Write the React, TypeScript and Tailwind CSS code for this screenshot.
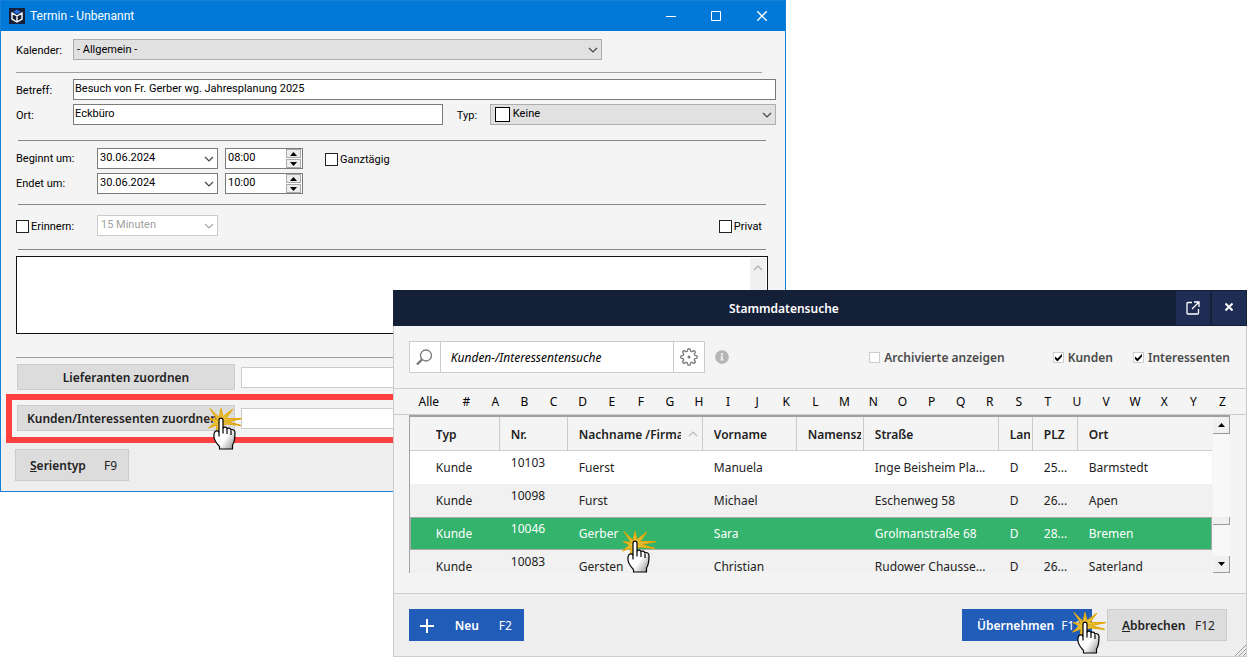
import React from 'react';
import { FaInfoCircle } from 'react-icons/fa';

const LETTERS = ['#', ...'ABCDEFGHIJKLMNOPQRSTUVWXYZ'.split('')];

const COLUMNS = ['Typ', 'Nr.', 'Nachname /Firma', 'Vorname', 'Namenszusatz', 'Straße', 'Land', 'PLZ', 'Ort'];

const ROWS = [
    { nr: '10103', nachname: 'Fuerst', vorname: 'Manuela', strasse: 'Inge Beisheim Pla...', plz: '25...', ort: 'Barmstedt' },
    { nr: '10098', nachname: 'Furst', vorname: 'Michael', strasse: 'Eschenweg 58', plz: '26...', ort: 'Apen' },
    { nr: '10046', nachname: 'Gerber', vorname: 'Sara', strasse: 'Grolmanstraße 68', plz: '28...', ort: 'Bremen' },
    { nr: '10083', nachname: 'Gersten', vorname: 'Christian', strasse: 'Rudower Chausse...', plz: '26...', ort: 'Saterland' },
];

const SELECTED = '10046';

// Outline of a cog with eight rounded teeth
const GEAR = Array.from({ length: 96 }, (_, i) => {
    const a = (i / 96) * Math.PI * 2;
    const r = 7.1 + 1.2 * Math.tanh(2 * Math.cos(a * 8));
    return `${(9 + r * Math.cos(a)).toFixed(2)},${(9 + r * Math.sin(a)).toFixed(2)}`;
}).join(' ');

const Chevron: React.FC<{ className?: string }> = ({ className = '' }) => (
    <svg width="10" height="6" viewBox="0 0 10 6" fill="none" stroke="currentColor" strokeWidth="1.2" className={`pointer-events-none absolute ${className}`}>
        <path d="M1 1l4 4 4-4" />
    </svg>
);

const ClickHand: React.FC<{ className?: string }> = ({ className = '' }) => (
    <svg width="36" height="44" viewBox="0 0 36 44" className={`pointer-events-none absolute z-10 ${className}`}>
        <path
            d="M3 1.5l9 9 2-9 2 8L26 2l-7 9.500L35 11.500l-14 3 13 4-14-1.500-5 1-6 8 1-8L1.500 21l7-6L2 11.500l8 1z"
            fill="#e9c443"
            stroke="#e5a800"
            strokeWidth="1"
        />
        <path d="M4 3l10 11M14.500 3v11M25 3L14 14M34 12l-20 2 19 4M3 12l11 2L3 20.500" fill="none" stroke="#d9a514" strokeWidth=".6" />
        <path
            d="M12 29V13c0-2.600 4-2.600 4 0v8c1-1.500 3.500-1 4 .6 1.200-1.100 3.400-.5 3.800 1.200 1.800-.8 4.200.2 4.200 2.700 0 6.500-.2 9.500-2.500 12.500v4H12.500v-2.500c-2-2.500-5-5-5.500-9.500-.3-3 .2-6 2.500-6.200 1.400-.1 2.500.7 2.500 2.700z"
            fill="url(#handShade)"
            stroke="#000"
            strokeWidth="1.200"
            strokeLinejoin="round"
        />
        <path d="M16 21v5.500M20 22v5M24 23.500v4.500" stroke="#000" strokeWidth="1.200" />
        <defs>
            <linearGradient id="handShade" x1="0.300" y1="0.400" x2="0.900" y2="1">
                <stop offset="0.400" stopColor="#fff" />
                <stop offset="1" stopColor="#999" />
            </linearGradient>
        </defs>
    </svg>
);

const Triangle: React.FC<{ down?: boolean }> = ({ down }) => (
    <svg width="7" height="4" viewBox="0 0 7 4">
        <path d={down ? 'M0 0h7L3.5 4z' : 'M0 4h7L3.5 0z'} fill="#000" />
    </svg>
);

const DateRow: React.FC<{ id: string; label: string; date: string; time: string; children?: React.ReactNode }> = ({ id, label, date, time, children }) => (
    <div className="flex h-[21px] items-center">
        <label htmlFor={id} className="w-[81px]">{label}</label>
        <div className="relative h-full w-[121px]">
            <select id={id} className="h-full w-full appearance-none border border-[#7a7a7a] bg-white pb-[2px] pl-[2px]">
                <option>{date}</option>
            </select>
            <Chevron className="right-[4px] top-[8px] text-[#444]" />
        </div>
        <div className="ml-[7px] flex h-full w-[78px] border border-[#7a7a7a] bg-white">
            <input aria-label={`${label} Uhrzeit`} defaultValue={time} className="w-full min-w-0 pb-[2px] pl-[2px] outline-none" />
            <div className="mr-px flex w-[15px] shrink-0 flex-col gap-px">
                <button aria-label="Später" className="flex w-full flex-1 items-center justify-center border border-[#aaa] bg-[#ececec]"><Triangle /></button>
                <button aria-label="Früher" className="flex w-full flex-1 items-center justify-center border border-[#aaa] bg-[#ececec]"><Triangle down /></button>
            </div>
        </div>
        {children}
    </div>
);

const BoxLabel: React.FC<{ label: string; className?: string }> = ({ label, className = '' }) => (
    <label className={`flex items-center gap-[2px] ${className}`}>
        <input type="checkbox" className="h-[13px] w-[13px] appearance-none border border-[#222] bg-white" />
        <span>{label}</span>
    </label>
);

const Filter: React.FC<{ label: string; checked?: boolean }> = ({ label, checked }) => (
    <label className="relative flex items-center gap-[4px]">
        <input type="checkbox" defaultChecked={checked} className="peer h-[11px] w-[11px] appearance-none border border-[#ccc] bg-white" />
        <svg width="9" height="9" viewBox="0 0 9 9" className="pointer-events-none absolute left-px hidden peer-checked:block">
            <path d="M1 3.500v2.500l2.500 2.500L8 3.500V1L3.500 5.500z" fill="#000" />
        </svg>
        <span className="font-semibold text-[#4a4a4a]">{label}</span>
    </label>
);

const AppointmentWindow: React.FC = () => (
    <section className="relative w-[63.03%] border border-[#1580d8] bg-[#f4f4f4] font-['Noto_Sans','Open_Sans',sans-serif] text-[11px] leading-[15px] text-black">
        {/* Title bar */}
        <header className="flex h-[30px] items-center bg-[#0078d7] pl-[8px] text-white">
            <svg width="16" height="16" viewBox="0 0 16 16">
                <rect width="16" height="16" fill="#14203c" />
                <path d="M3 5v6l5 3 5-3V5L8 8zM8 8v5" fill="none" stroke="#fff" strokeWidth="1.400" />
                <path d="M4 4l4-2.500L12 4 8 6z" fill="#2a6be0" />
            </svg>
            <h1 className="ml-[5px] font-['Roboto',sans-serif] text-[12px]">Termin - Unbenannt</h1>
            <div className="ml-auto flex h-full">
                <button aria-label="Minimieren" className="flex w-[46px] items-center justify-center">
                    <svg width="10" height="10"><path d="M0 5.500h10" stroke="#fff" /></svg>
                </button>
                <button aria-label="Maximieren" className="flex w-[45px] items-center justify-center">
                    <svg width="10" height="10"><path d="M.5.5h9v9h-9z" fill="none" stroke="#fff" /></svg>
                </button>
                <button aria-label="Schließen" className="flex w-[46px] items-center justify-center">
                    <svg width="10" height="10"><path d="M0 0l10 10M10 0L0 10" stroke="#fff" strokeWidth="1.300" /></svg>
                </button>
            </div>
        </header>

        {/* Form */}
        <div className="pb-[8px] pl-[15px] pr-[9px] pt-[8px]">
            <div className="font-['Roboto',sans-serif]">
                <div className="flex h-[21px] items-center">
                    <label htmlFor="kalender" className="w-[57px] pt-px">Kalender:</label>
                    <div className="relative mr-[174px] h-full flex-1">
                        <select id="kalender" className="h-full w-full appearance-none border border-[#adadad] bg-[#e1e1e1] pl-[3px]">
                            <option>- Allgemein -</option>
                        </select>
                        <Chevron className="right-[4px] top-[8px] text-[#444]" />
                    </div>
                </div>
                <hr className="mb-[6px] mr-[14px] mt-[12px] border-[#a0a0a0]" />
                <div className="flex h-[21px] items-center">
                    <label htmlFor="betreff" className="w-[57px] pt-px">Betreff:</label>
                    <input id="betreff" defaultValue="Besuch von Fr. Gerber wg. Jahresplanung 2025" className="h-full min-w-0 flex-1 border border-[#7a7a7a] bg-white pb-[2px] pl-px" />
                </div>
                <div className="mt-[4px] flex h-[21px] items-center">
                    <label htmlFor="ort" className="w-[57px] pt-px">Ort:</label>
                    <input id="ort" defaultValue="Eckbüro" className="h-full min-w-0 flex-[368] border border-[#7a7a7a] bg-white pb-[2px] pl-px" />
                    <label htmlFor="typ" className="w-[47px] pl-[14px] pt-px">Typ:</label>
                    <div className="relative h-full flex-[287]">
                        <select id="typ" className="h-full w-full appearance-none border border-[#adadad] bg-[#e1e1e1] pb-[2px] pl-[22px]">
                            <option>Keine</option>
                        </select>
                        <span className="pointer-events-none absolute left-[5px] top-[3px] h-[15px] w-[15px] border border-black bg-white" />
                        <Chevron className="right-[4px] top-[8px] text-[#444]" />
                    </div>
                </div>
                <hr className="mb-[7px] ml-[2px] mr-[10px] mt-[15px] border-[#888]" />
                <DateRow id="beginn" label="Beginnt um:" date="30.06.2024" time="08:00">
                    <BoxLabel label="Ganztägig" className="ml-[22px] pt-[2px]" />
                </DateRow>
                <div className="mt-[4px]">
                    <DateRow id="ende" label="Endet um:" date="30.06.2024" time="10:00" />
                </div>
                <hr className="mb-[10px] ml-[2px] mr-[10px] mt-[10px] border-[#888]" />
                <div className="flex h-[21px] items-center">
                    <BoxLabel label="Erinnern:" className="w-[81px] pt-[2px]" />
                    <div className="relative h-full w-[121px]">
                        <select disabled aria-label="Erinnerung" className="h-full w-full appearance-none border border-[#ccc] bg-white pb-[2px] pl-[3px] text-[#a0a0a0]">
                            <option>15 Minuten</option>
                        </select>
                        <Chevron className="right-[4px] top-[8px] text-[#aaa]" />
                    </div>
                    <BoxLabel label="Privat" className="ml-auto mr-[14px] pt-[2px]" />
                </div>
                <hr className="mb-[6px] ml-[2px] mr-[10px] mt-[13px] border-[#888]" />
            </div>
            <div className="mr-[8px] flex h-[78px] border border-[#111] bg-white">
                <textarea aria-label="Notiz" className="h-full flex-1 resize-none outline-none" />
                <div className="relative mr-px mt-px w-[16px] bg-[#f0f0f0]">
                    <Chevron className="left-[3px] top-[7px] rotate-180 text-[#aaa]" />
                </div>
            </div>
            <hr className="mb-[6px] mt-[23px] border-[#a0a0a0]" />
            <div className="flex items-center gap-[6px] pl-px text-[12px] text-[#222]">
                <button className="h-[26px] w-[218px] border border-[#ccc] bg-[#dcdcdc] font-semibold">Lieferanten zuordnen</button>
                <input aria-label="Lieferanten" className="h-[21px] min-w-0 flex-1 border border-[#ccc] bg-white" />
            </div>
            <div className="relative mt-[15px] flex items-center gap-[6px] pl-px text-[12px] text-[#222]">
                <button className="h-[26px] w-[218px] whitespace-nowrap border border-[#ccc] bg-[#dcdcdc] pl-[9px] text-left font-semibold">Kunden/Interessenten zuordnen</button>
                <input aria-label="Kunden/Interessenten" className="h-[21px] min-w-0 flex-1 border border-[#ccc] bg-white" />
                <div className="pointer-events-none absolute -inset-x-[10px] -bottom-[12px] -top-[11px] border-[6px] border-[#ff4040]" />
                <ClickHand className="left-[191px] top-[2px]" />
            </div>
        </div>

        <footer className="flex h-[52px] items-center bg-[#eee] pl-[14px] text-[12px] text-[#222]">
            <button className="flex h-[32px] w-[114px] items-center justify-between border border-[#ccc] bg-[#dcdcdc] pl-[14px] pr-[11px]">
                <span className="font-semibold"><u>S</u>erientyp</span>
                <span>F9</span>
            </button>
        </footer>
    </section>
);

const SearchDialog: React.FC = () => (
    <section className="absolute bottom-0 left-[31.5%] right-0 top-[290px] flex flex-col bg-[#f4f4f4] font-['Noto_Sans','Open_Sans',sans-serif] text-[12px] leading-[16px] text-[#222]">
        <header className="relative flex h-[36px] items-center justify-end gap-[2px] bg-[#141f38] p-px text-white">
            <h2 className="flex-1 pt-[2px] text-center text-[12px] font-semibold">Stammdatensuche</h2>
            <button aria-label="In neuem Fenster öffnen" className="flex h-full w-[34px] items-center justify-center bg-[#1f2d54]">
                <svg width="14" height="14" viewBox="0 0 14 14" fill="none" stroke="#fff" strokeWidth="1.300">
                    <path d="M6 1.500H2Q1 1.500 1 2.500V12q0 1 1 1h9.500q1 0 1-1V8M8 1h5v5M13 1L6 8" />
                </svg>
            </button>
            <button aria-label="Schließen" className="flex h-full w-[34px] items-center justify-center bg-[#1f2d54] pb-[2px]">
                <svg width="8" height="8" viewBox="0 0 8 8" stroke="#fff" strokeWidth="2"><path d="M.5.5l7 7M7.500.5l-7 7" /></svg>
            </button>
        </header>

        <div className="flex flex-1 flex-col border border-t-0 border-[#ccc]">
            {/* Search bar */}
            <div className="flex h-[62px] items-center pl-[15px] pr-[16px]">
                <div className="flex h-[32px] w-[296px] border border-[#ccc] bg-white">
                    <button aria-label="Suchen" className="flex w-[31px] items-center justify-center border-r border-[#ccc]">
                        <svg width="17" height="17" viewBox="0 0 17 17" fill="none" stroke="#777">
                            <circle cx="10" cy="6.500" r="5.500" strokeWidth="1.300" />
                            <path d="M6 10.500L1 15.500" strokeWidth="2.400" />
                        </svg>
                    </button>
                    <input aria-label="Suche" placeholder="Kunden-/Interessentensuche" className="min-w-0 flex-1 pl-[10px] pt-px italic outline-none placeholder:text-black" />
                    <button aria-label="Sucheinstellungen" className="flex w-[31px] items-center justify-center border-l border-[#ccc]">
                        <svg width="18" height="18" viewBox="0 0 18 18" fill="none" stroke="#777" strokeWidth="1.300">
                            <polygon points={GEAR} strokeLinejoin="round" />
                            <circle cx="9" cy="9" r="1.500" fill="#777" stroke="none" />
                        </svg>
                    </button>
                </div>
                <FaInfoCircle className="ml-[10px] h-[14px] w-[14px] text-[#b5b5b5]" />
                <div className="ml-auto flex items-center pt-px">
                    <Filter label="Archivierte anzeigen" />
                    <div className="ml-[48px]"><Filter label="Kunden" checked /></div>
                    <div className="ml-[20px]"><Filter label="Interessenten" checked /></div>
                </div>
            </div>

            {/* Alphabet index */}
            <nav className="flex h-[27px] border-y border-[#ccc] pl-[14px] pr-[9px] text-black">
                <button className="w-[44px] pr-[2px]">Alle</button>
                {LETTERS.map((letter) => (
                    <button key={letter} className="min-w-0 flex-1">{letter}</button>
                ))}
            </nav>

            {/* Results */}
            <div className="relative ml-[15px] mr-[16px] flex h-[158px] border-l border-t-2 border-[#a0a0a0]">
                <div className="min-w-0 flex-1 overflow-hidden">
                    <table className="w-full table-fixed border-separate border-spacing-0">
                        <colgroup>
                            <col className="w-[90px]" />
                            <col className="w-[68px]" />
                            <col className="w-[135px]" />
                            <col className="w-[94px]" />
                            <col className="w-[67px]" />
                            <col className="w-[135px]" />
                            <col className="w-[34px]" />
                            <col className="w-[45px]" />
                            <col />
                        </colgroup>
                        <thead>
                            <tr className="h-[34px]">
                                {COLUMNS.map((column) => (
                                    <th key={column} className="relative whitespace-nowrap border-b border-r border-[#ccc] pl-[11px] pr-[2px] pt-[2px] text-left font-semibold first:pl-[26px] last:border-r-0">
                                        <div className={column === 'Nachname /Firma' ? 'w-[102px] overflow-hidden' : 'overflow-hidden'}>{column}</div>
                                        {column === 'Nachname /Firma' && <Chevron className="right-[4px] top-[14px] rotate-180 text-[#bbb]" />}
                                    </th>
                                ))}
                            </tr>
                        </thead>
                        <tbody>
                            {ROWS.map((row) => (
                                <tr
                                    key={row.nr}
                                    className={
                                        row.nr === SELECTED
                                            ? 'h-[33px] bg-[#33b36b] text-white [&>td]:border-y [&>td]:border-[#a9a9a9] [&>td:first-child]:border-l [&>td:first-child]:pl-[25px] [&>td:last-child]:border-r'
                                            : 'h-[33px] odd:bg-white even:bg-[#f1f1f1]'
                                    }
                                >
                                    <td className="pl-[26px]">Kunde</td>
                                    <td className="pb-[9px] pl-[11px]">{row.nr}</td>
                                    <td className="pl-[11px]">{row.nachname}</td>
                                    <td className="pl-[11px]">{row.vorname}</td>
                                    <td />
                                    <td className="whitespace-nowrap pl-[11px]">{row.strasse}</td>
                                    <td className="pl-[11px]">D</td>
                                    <td className="pl-[11px]">{row.plz}</td>
                                    <td className="pl-[11px]">{row.ort}</td>
                                </tr>
                            ))}
                        </tbody>
                    </table>
                </div>
                <div className="ml-px flex w-[17px] flex-col bg-[#f8f8f8]">
                    <button aria-label="Nach oben" className="flex h-[17px] items-center justify-center border-b border-r border-[#999] bg-[#f0f0f0]"><Triangle /></button>
                    <div className="mt-[83px] h-[8px] border-b border-r border-[#999] bg-[#f0f0f0]" />
                    <button aria-label="Nach unten" className="mt-auto flex h-[17px] items-center justify-center border-b border-r border-[#999] bg-[#f0f0f0]"><Triangle down /></button>
                </div>
                <ClickHand className="left-[211px] top-[113px]" />
            </div>

            <footer className="relative mt-[20px] flex flex-1 items-start border-t border-[#ccc] bg-[#eee] pb-[15px] pl-[15px] pr-[19px] pt-[15px]">
                <button className="flex h-[32px] w-[115px] items-center bg-[#215cb8] pl-[11px] pt-px text-white">
                    <svg width="14" height="14"><path d="M7 0v14M0 7h14" stroke="#fff" strokeWidth="2" /></svg>
                    <span className="ml-[21px] font-semibold">Neu</span>
                    <span className="ml-auto mr-[12px]">F2</span>
                </button>
                <button className="relative ml-auto flex h-[32px] w-[130px] items-center gap-[7px] bg-[#215cb8] pl-[15px] pt-px text-white">
                    <span className="font-semibold">Übernehmen</span>
                    <span>F11</span>
                    <ClickHand className="-right-[15px] top-[2px]" />
                </button>
                <button className="ml-[15px] flex h-[32px] w-[120px] items-center justify-between border border-[#ccc] bg-[#dcdcdc] pl-[14px] pr-[11px] pt-px">
                    <span className="font-semibold"><u>A</u>bbrechen</span>
                    <span>F12</span>
                </button>
                <svg width="11" height="11" className="absolute bottom-0 right-0" stroke="#999">
                    <path d="M0 11L11 0M4 11l7-7M8 11l3-3" />
                </svg>
            </footer>
        </div>
    </section>
);

const App: React.FC = () => {
    return (
        <main className="relative min-h-screen overflow-hidden bg-white">
            <AppointmentWindow />
            <SearchDialog />
        </main>
    );
};

export default App;
